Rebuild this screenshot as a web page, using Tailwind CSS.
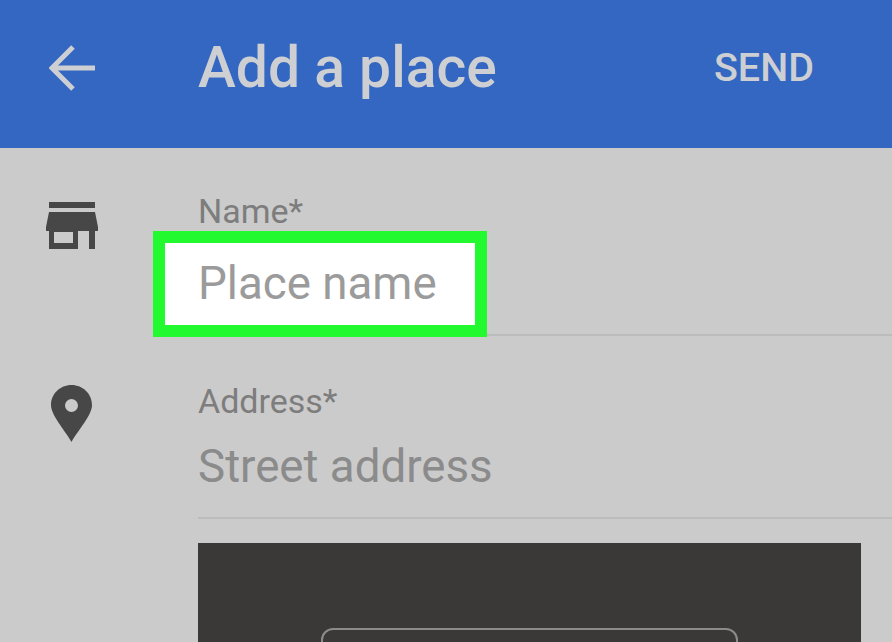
<!DOCTYPE html>
<html lang="en">
<head>
    <meta charset="UTF-8">
    <title>Add a place</title>
    <script src="https://cdn.jsdelivr.net/npm/@tailwindcss/browser@4"></script>
</head>
<body class="font-['Roboto',sans-serif] bg-[#cbcbcb] overflow-hidden">
    <div class="w-[892px] h-[642px] overflow-hidden">
        <!-- app bar -->
        <header class="h-[148px] pb-[13px] bg-[#3367c1] flex items-center text-[#cdcfd3]">
            <div class="w-[198px] pl-[49px] shrink-0">
                <svg class="block" width="47" height="46" viewBox="0 0 47 46" fill="none" stroke="#cdcfd3" stroke-width="5">
                    <path d="M46 23H4M24 2L3 23l21 21"/>
                </svg>
            </div>
            <h1 class="text-[57px] font-medium leading-none flex-1">Add a place</h1>
            <span class="text-[39.5px] font-medium leading-none pr-[78px]">SEND</span>
        </header>

        <main class="flex">
            <!-- icons -->
            <div class="w-[198px] shrink-0 pl-[46px]">
                <svg class="mt-[54px]" width="52" height="47" viewBox="0 0 52 47" fill="#474747">
                    <path fill-rule="evenodd" d="M3 0H49V6H3ZM3 10H49L52 25V29H49V47H43V29H32V47H3V29H0V25ZM8 30V41H27V30Z"/>
                </svg>
                <svg class="mt-[136px] ml-[5px]" width="41" height="57" viewBox="0 0 41 57" fill="#474747">
                    <path fill-rule="evenodd" d="M20.500 0C9 0 0 9 0 20C0 30 13 44 20.500 57C28 44 41 30 41 20C41 9 32 0 20.500 0ZM20.500 14A6.500 6.500 0 1 1 20.500 27A6.500 6.500 0 1 1 20.500 14Z"/>
                </svg>
            </div>

            <!-- form -->
            <div class="flex-1 min-w-0">
                <div class="h-[83px] pt-[45px] text-[34px] leading-[37px] text-[#7d7d7d]">Name*</div>
                <div class="flex items-end h-[106px]">
                    <div class="ml-[-45px] w-[334px] h-[106px] shrink-0 border-[12px] border-[#22f92e] bg-white pl-[33px] flex items-center text-[45.7px] leading-none text-[#9b9b9b]">Place name</div>
                    <div class="flex-1 h-[2px] mb-[1px] bg-[#bcbcbc]"></div>
                </div>
                <div class="h-[45px] mt-[46px] text-[34px] leading-[37px] text-[#7d7d7d]">Address*</div>
                <div class="h-[91px] pt-[14px] border-b-2 border-[#bcbcbc] text-[45.7px] leading-[50px] text-[#8b8b8b]">Street address</div>

                <div class="mt-[24px] w-[663px] h-[99px] bg-[#3a3937] overflow-hidden pt-[85px] pl-[123px]">
                    <div class="w-[417px] h-[40px] rounded-[12px] border-2 border-[#8b8b89]"></div>
                </div>
            </div>
        </main>
    </div>
</body>
</html>
